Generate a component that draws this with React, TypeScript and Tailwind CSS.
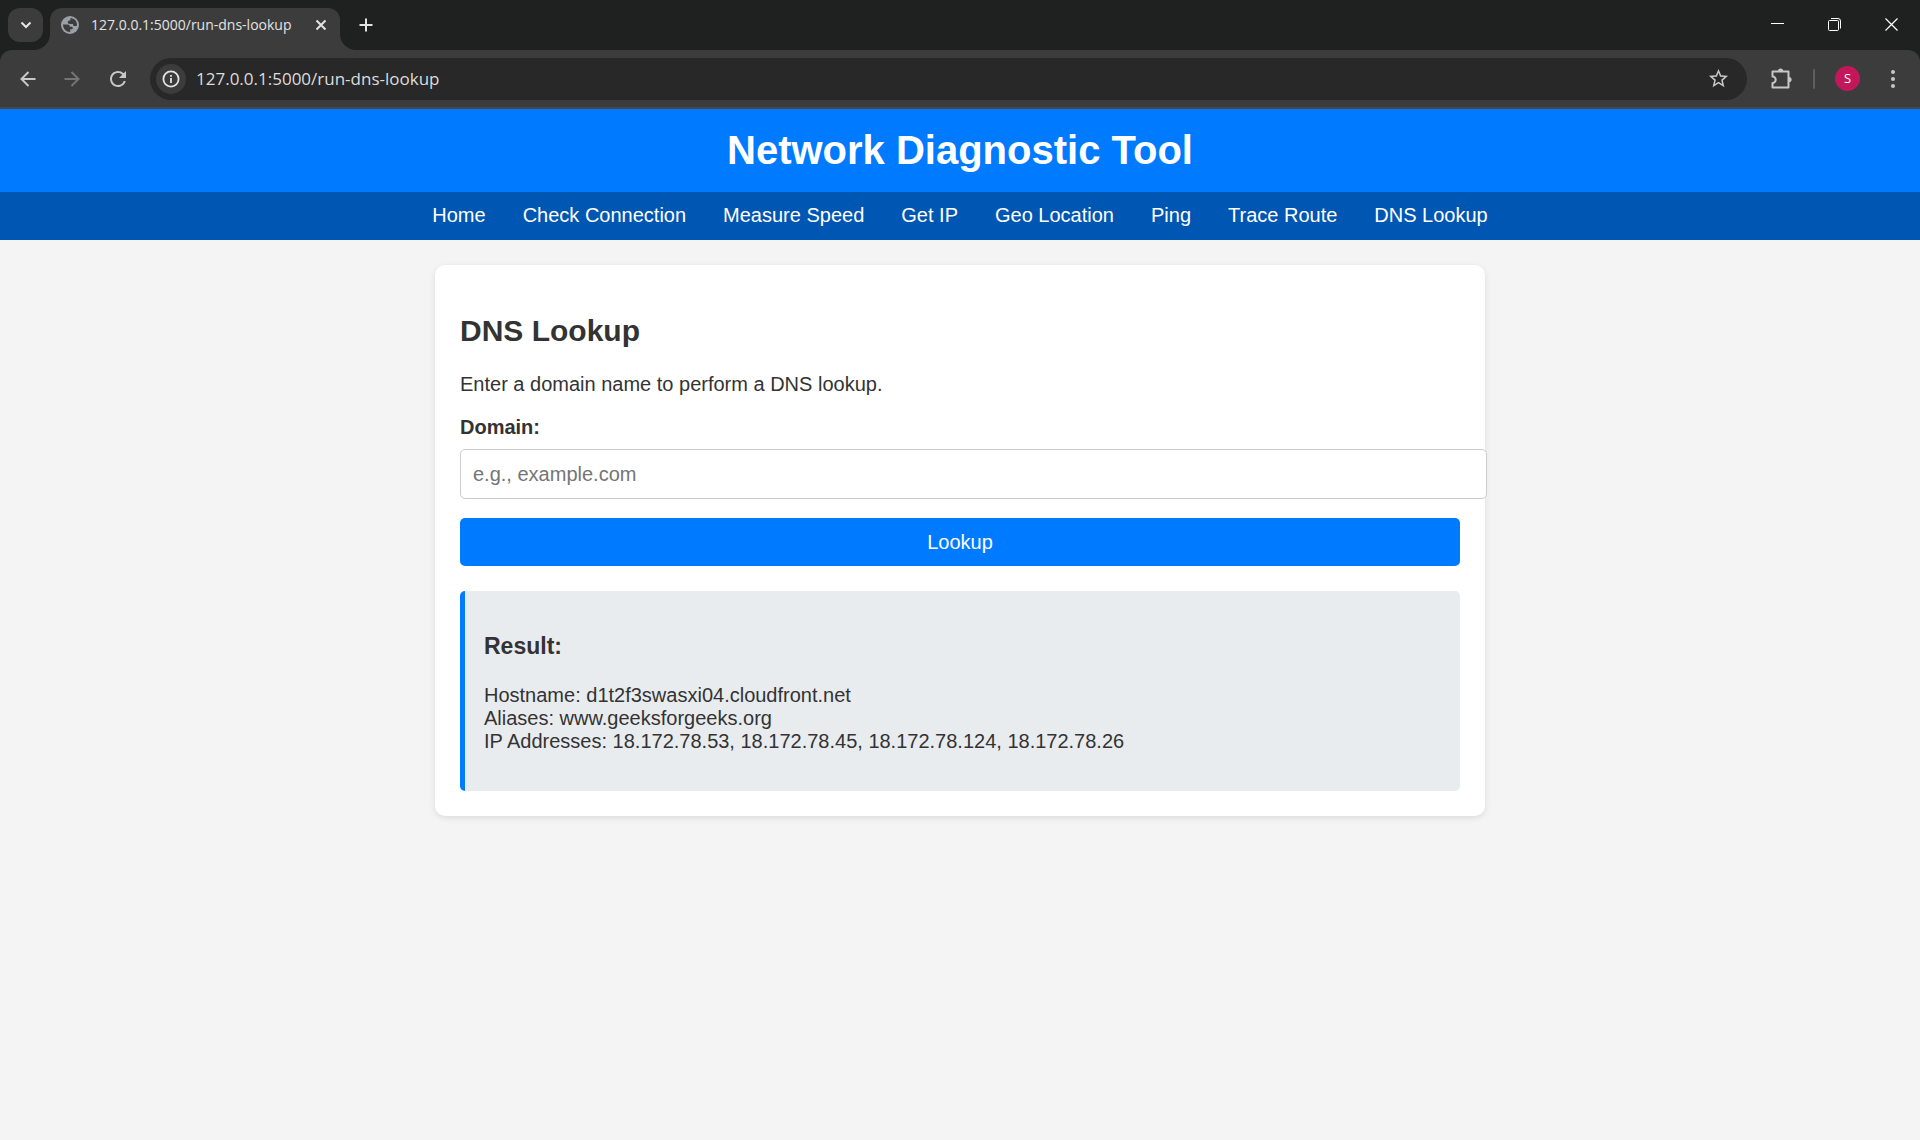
import type { ReactNode } from "react";
import { MdRefresh, MdStarOutline } from "react-icons/md";

const navItems = [
  "Home",
  "Check Connection",
  "Measure Speed",
  "Get IP",
  "Geo Location",
  "Ping",
  "Trace Route",
  "DNS Lookup",
];

const resultLines = [
  "Hostname: d1t2f3swasxi04.cloudfront.net",
  "Aliases: www.geeksforgeeks.org",
  "IP Addresses: 18.172.78.53, 18.172.78.45, 18.172.78.124, 18.172.78.26",
];

function IconButton({
  label,
  className = "",
  children,
}: {
  label: string;
  className?: string;
  children: ReactNode;
}) {
  return (
    <button
      type="button"
      aria-label={label}
      className={`flex shrink-0 items-center justify-center ${className}`}
    >
      {children}
    </button>
  );
}

function TabStrip() {
  return (
    <div className="flex h-[50px] items-start justify-between bg-[#1f2120] pl-2">
      <div className="flex">
        <IconButton
          label="Search tabs"
          className="mt-2 h-[34px] w-[35px] rounded-xl bg-[#3c3c3c] text-[#e6e6e6]"
        >
          <svg width="12" height="8" viewBox="0 0 12 8" fill="none" stroke="currentColor" strokeWidth="2">
            <path d="M1.5 1.5 6 6l4.500-4.500" />
          </svg>
        </IconButton>
        <div className="relative mt-2 ml-[7px] flex h-[42px] w-[290px] items-center rounded-t-xl bg-[#3c3c3c] px-[11px] pb-2 before:absolute before:bottom-0 before:-left-4 before:size-4 before:rounded-br-2xl before:shadow-[4px_4px_0_4px_#3c3c3c] after:absolute after:-right-4 after:bottom-0 after:size-4 after:rounded-bl-2xl after:shadow-[-4px_4px_0_4px_#3c3c3c]">
          <svg width="18" height="18" viewBox="0 0 18 18" className="shrink-0">
            <circle cx="9" cy="9" r="9" fill="#9aa0a6" />
            <g fill="#3c3c3c">
              <path d="M9.500 2c3.600.2 6.500 3.200 6.500 6.700 0 .8-.4 1.300-1.200 1.300h-1.300c-.9 0-1.500-.6-1.500-1.500V8H8.800C7.600 8 6.800 7.300 6.800 6.300 6.800 5.300 7.500 4.700 8.500 4.600 9.300 4.500 9.600 4 9.500 3.300Z" />
              <path d="M2 8.500h4.500c1.300 0 2.300.9 2.300 2.200h1.700c.8 0 1.300.6 1.300 1.300s-.5 1.300-1.300 1.300H9.200v2.700C5.200 16.100 2 12.900 2 8.500Z" />
            </g>
          </svg>
          <span className="ml-3 grow text-[14px] leading-5 whitespace-nowrap text-[#e3e3e3]">
            127.0.0.1:5000/run-dns-lookup
          </span>
          <IconButton label="Close tab" className="-mr-0.5 size-5 text-[#e3e3e3]">
            <svg width="12" height="12" viewBox="0 0 12 12" stroke="currentColor" strokeWidth="2">
              <path d="m1.500 1.500 9 9m0-9-9 9" />
            </svg>
          </IconButton>
        </div>
        <IconButton label="New tab" className="mt-[11px] ml-3 size-7 text-[#e3e3e3]">
          <svg width="14" height="14" viewBox="0 0 14 14" stroke="currentColor" strokeWidth="2">
            <path d="M7 .5v13M.5 7h13" />
          </svg>
        </IconButton>
      </div>
      <div className="flex text-white">
        <IconButton label="Minimize" className="h-12 w-[57px]">
          <svg width="13" height="13" viewBox="0 0 13 13" fill="none" stroke="currentColor">
            <path d="M0 5.500h13" />
          </svg>
        </IconButton>
        <IconButton label="Restore" className="h-12 w-[57px]">
          <svg width="13" height="13" viewBox="0 0 13 13" fill="none" stroke="currentColor">
            <rect x=".5" y="2.500" width="10" height="10" rx="1" />
            <path d="M3 .5h7a2.500 2.500 0 0 1 2.500 2.500v7.500" />
          </svg>
        </IconButton>
        <IconButton label="Close window" className="h-12 w-[57px]">
          <svg width="13" height="13" viewBox="0 0 13 13" stroke="currentColor" strokeWidth="1.200">
            <path d="m.5.5 12 12m0-12-12 12" />
          </svg>
        </IconButton>
      </div>
    </div>
  );
}

function Toolbar() {
  return (
    <div className="bg-[#1f2120]">
      <div className="flex h-[59px] items-center rounded-t-xl border-b-2 border-[#474747] bg-[#3c3c3c] pr-[11px] pl-3">
        <IconButton label="Back" className="size-8 text-[#c7c7c7]">
          <svg width="16" height="16" viewBox="0 0 16 16" fill="none" stroke="currentColor" strokeWidth="2">
            <path d="M15.500 8H2M8.500 1 1.500 8l7 7" />
          </svg>
        </IconButton>
        <IconButton label="Forward" className="ml-3 size-8 text-[#757575]">
          <svg width="16" height="16" viewBox="0 0 16 16" fill="none" stroke="currentColor" strokeWidth="2">
            <path d="M.5 8H14M7.500 1l7 7-7 7" />
          </svg>
        </IconButton>
        <IconButton label="Reload" className="ml-[14px] size-8 text-[#c7c7c7]">
          <MdRefresh size={24} />
        </IconButton>
        <div className="ml-4 flex h-[42px] grow items-center rounded-full bg-[#282828] pr-[17px] pl-1.5">
          <IconButton label="View site information" className="size-[30px] rounded-full bg-[#3c3c3c] text-[#e3e3e3]">
            <svg width="18" height="18" viewBox="0 0 18 18" fill="none" stroke="currentColor" strokeWidth="1.800">
              <circle cx="9" cy="9" r="7.600" />
              <path d="M9 8v5M9 5v1.800" />
            </svg>
          </IconButton>
          <input
            type="text"
            aria-label="Address"
            defaultValue="127.0.0.1:5000/run-dns-lookup"
            className="ml-2.5 min-w-0 grow bg-transparent text-[17px] leading-6 text-[#dcdcdc] outline-none"
          />
          <IconButton label="Bookmark this tab" className="size-6 text-[#c7c7c7]">
            <MdStarOutline size={23} />
          </IconButton>
        </div>
        <IconButton label="Extensions" className="ml-[18px] size-8 text-[#c7c7c7]">
          <svg width="22" height="22" viewBox="0 0 22 22" fill="none" stroke="currentColor" strokeWidth="2">
            <path d="M2.500 3.500h16v16h-16v-4.500a3.200 3.200 0 0 0 0-6.400Z" strokeLinejoin="round" />
            <path d="M8 3a2.600 2.600 0 0 1 5.200 0ZM19 8.900a2.600 2.600 0 0 1 0 5.200Z" fill="currentColor" stroke="none" />
          </svg>
        </IconButton>
        <span className="ml-4 h-5 w-0.5 rounded-full bg-[#5e5e5e]" />
        <IconButton
          label="Profile"
          className="ml-5 size-[25px] rounded-full bg-[#c2185b] text-[13px] leading-none text-white"
        >
          S
        </IconButton>
        <IconButton label="Menu" className="ml-[17px] size-8 text-[#c7c7c7]">
          <svg width="4" height="18" viewBox="0 0 4 18" fill="currentColor">
            <circle cx="2" cy="2" r="2" />
            <circle cx="2" cy="9" r="2" />
            <circle cx="2" cy="16" r="2" />
          </svg>
        </IconButton>
      </div>
    </div>
  );
}

export default function App() {
  return (
    <div className="min-h-screen bg-[#f4f4f4] font-['Liberation_Sans',Arial,sans-serif] text-[20px] leading-[23px] text-[#333]">
      <div className="font-['Open_Sans','Segoe_UI',sans-serif]">
        <TabStrip />
        <Toolbar />
      </div>

      <header className="bg-[#007bff] pt-[18px] pb-[19px] text-center text-white">
        <h1 className="text-[40px] leading-[46px] font-bold">Network Diagnostic Tool</h1>
      </header>

      <nav className="bg-[#0056b3] pt-3 pb-[13px]">
        <ul className="flex flex-wrap justify-center gap-x-[37px] text-white">
          {navItems.map((item) => (
            <li key={item}>
              <a href="#">{item}</a>
            </li>
          ))}
        </ul>
      </nav>

      <main className="mx-auto mt-[25px] max-w-[1050px] rounded-[10px] bg-white px-[25px] pt-[49px] pb-[25px] shadow-[0_2px_6px_rgba(0,0,0,0.1)]">
        <h2 className="text-[30px] leading-[34px] font-bold">DNS Lookup</h2>
        <p className="mt-[25px]">Enter a domain name to perform a DNS lookup.</p>
        <form className="mt-5" onSubmit={(event) => event.preventDefault()}>
          <label htmlFor="domain" className="block font-bold">
            Domain:
          </label>
          <input
            id="domain"
            type="text"
            placeholder="e.g., example.com"
            className="mt-2.5 block h-[50px] w-[calc(100%+27px)] rounded-[5px] border border-[#ccc] bg-white px-3 placeholder:text-[#757575]"
          />
          <button type="submit" className="mt-[19px] block h-12 w-full rounded-[5px] bg-[#007bff] text-white">
            Lookup
          </button>
        </form>
        <section className="mt-[25px] rounded-[5px] border-l-5 border-[#007bff] bg-[#e9ecef] px-[19px] pt-[42px] pb-[38px]">
          <h3 className="text-[23px] leading-[27px] font-bold">Result:</h3>
          <p className="mt-6">
            {resultLines.map((line) => (
              <span key={line} className="block">
                {line}
              </span>
            ))}
          </p>
        </section>
      </main>
    </div>
  );
}
